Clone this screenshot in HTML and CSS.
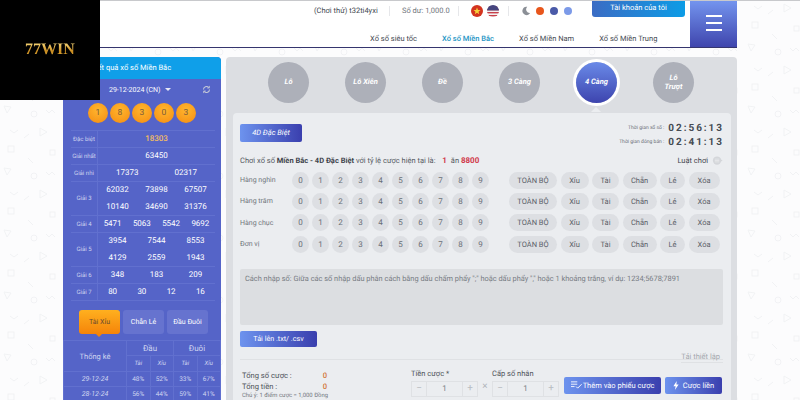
FILE: index.html
```html
<!DOCTYPE html>
<html>
<head>
  <title>Xổ số Miền Bắc</title>
  <link rel="stylesheet" href="styles.css">
</head>
<body>
  <div class="logo"><span>77WIN</span></div>

  <div class="page">
    <header class="header">
      <div class="header-main">
        <div class="top-row">
          <span class="user">(Chơi thử) t32ti4yxi</span>
          <i class="sep"></i>
          <span class="balance">Số dư: 1,000.0</span>
          <i class="sep"></i>
          <svg class="flag" viewBox="0 0 12 12"><circle cx="6" cy="6" r="6" fill="#d3341f"/><polygon points="6,2.5 7,5 9.5,5 7.5,6.7 8.2,9.2 6,7.7 3.8,9.2 4.5,6.7 2.5,5 5,5" fill="#f7d13a"/></svg>
          <svg class="flag" viewBox="0 0 12 12"><defs><clipPath id="us"><circle cx="6" cy="6" r="6"/></clipPath></defs><g clip-path="url(#us)"><rect width="12" height="12" fill="#f3f0f0"/><rect y="1" width="12" height="1.4" fill="#c8414b"/><rect y="4" width="12" height="1.4" fill="#c8414b"/><rect y="7" width="12" height="1.4" fill="#c8414b"/><rect y="10" width="12" height="1.4" fill="#c8414b"/><rect width="12" height="5.4" fill="#46467f"/></g></svg>
          <i class="sep sep-wide"></i>
          <svg class="moon" viewBox="0 0 12 12"><path d="M7.5 1A5 5 0 1 0 11 8.5 4.4 4.4 0 0 1 7.5 1z" fill="#8b8f96"/></svg>
          <i class="dot dot-orange"></i>
          <i class="dot dot-navy"></i>
          <i class="dot dot-sky"></i>
          <a class="account">Tài khoản của tôi</a>
        </div>
        <nav class="nav">
          <a>Xổ số siêu tốc</a>
          <a class="active">Xổ số Miền Bắc</a>
          <a>Xổ số Miền Nam</a>
          <a>Xổ số Miền Trung</a>
        </nav>
      </div>
      <div class="burger"><i></i><i></i><i></i></div>
    </header>

    <div class="content">
      <aside class="sidebar">
        <div class="side-title">Kết quả xổ số Miền Bắc</div>
        <div class="side-date">
          <span>29-12-2024 (CN)</span><i class="caret"></i>
          <svg class="refresh" viewBox="0 0 12 12"><path d="M2 6a4 4 0 0 1 7-2.6M10 6a4 4 0 0 1-7 2.6" fill="none" stroke="#c5cad8" stroke-width="1.4"/><path d="M9.8 1.2v2.8H7M2.2 10.8V8H5" fill="none" stroke="#c5cad8" stroke-width="1.1"/></svg>
        </div>
        <div class="balls">
          <span>1</span><span>8</span><span>3</span><span>0</span><span>3</span>
        </div>
        <div class="results">
          <div class="res-row"><b>Đặc biệt</b><div class="vals one"><span class="special">18303</span></div></div>
          <div class="res-row"><b>Giải nhất</b><div class="vals one"><span>63450</span></div></div>
          <div class="res-row"><b>Giải nhì</b><div class="vals two"><span>17373</span><span>02317</span></div></div>
          <div class="res-row"><b>Giải 3</b><div class="vals three"><span>62032</span><span>73898</span><span>67507</span><span>10140</span><span>34690</span><span>31376</span></div></div>
          <div class="res-row"><b>Giải 4</b><div class="vals four"><span>5471</span><span>5063</span><span>5542</span><span>9692</span></div></div>
          <div class="res-row"><b>Giải 5</b><div class="vals three"><span>3954</span><span>7544</span><span>8553</span><span>4129</span><span>2559</span><span>1943</span></div></div>
          <div class="res-row"><b>Giải 6</b><div class="vals three"><span>348</span><span>183</span><span>209</span></div></div>
          <div class="res-row"><b>Giải 7</b><div class="vals four"><span>80</span><span>30</span><span>12</span><span>16</span></div></div>
        </div>
        <div class="side-tabs">
          <a class="active">Tài Xỉu</a>
          <a>Chẵn Lẻ</a>
          <a>Đầu Đuôi</a>
        </div>
        <table class="stats">
          <tr class="h1"><th rowspan="2" class="stats-name">Thống kê</th><th colspan="2">Đầu</th><th colspan="2">Đuôi</th></tr>
          <tr class="h2"><td>Tài</td><td>Xỉu</td><td>Tài</td><td>Xỉu</td></tr>
          <tr><td class="day">29-12-24</td><td>48%</td><td>52%</td><td>33%</td><td>67%</td></tr>
          <tr><td class="day">28-12-24</td><td>56%</td><td>44%</td><td>59%</td><td>41%</td></tr>
        </table>
      </aside>

      <main class="main">
        <div class="modes">
          <a>Lô</a>
          <a>Lô Xiên</a>
          <a>Đề</a>
          <a>3 Càng</a>
          <a class="active">4 Càng</a>
          <a>Lô<br>Trượt</a>
        </div>

        <section class="panel">
          <div class="panel-top">
            <a class="btn btn-type">4D Đặc Biệt</a>
            <div class="timers">
              <div><small>Thời gian xổ số :</small><b>02:56:13</b></div>
              <div><small>Thời gian đóng bán :</small><b>02:41:13</b></div>
            </div>
          </div>

          <div class="rate">
            <p>Chơi xổ số <b>Miền Bắc - 4D Đặc Biệt</b> với tỷ lệ cược hiện tại là: <em>1</em> ăn <em>8800</em></p>
            <span class="rules">Luật chơi
              <svg viewBox="0 0 12 12"><circle cx="5.5" cy="6" r="4.500" fill="#d4d6da"/><path d="M8 3.500L11.500 6 8 8.500z" fill="#d4d6da"/><path d="M3 4.500h5M3 6h5M3 7.500h5" stroke="#eceef0" stroke-width=".7"/></svg>
            </span>
          </div>

          <div class="pick-row">
            <span class="pick-label">Hàng nghìn</span>
            <div class="digits"><i>0</i><i>1</i><i>2</i><i>3</i><i>4</i><i>5</i><i>6</i><i>7</i><i>8</i><i>9</i></div>
            <div class="quick"><a class="q-all">TOÀN BỘ</a><a class="q-xiu">Xỉu</a><a class="q-tai">Tài</a><a class="q-chan">Chẵn</a><a class="q-le">Lẻ</a><a class="q-xoa">Xóa</a></div>
          </div>
          <div class="pick-row">
            <span class="pick-label">Hàng trăm</span>
            <div class="digits"><i>0</i><i>1</i><i>2</i><i>3</i><i>4</i><i>5</i><i>6</i><i>7</i><i>8</i><i>9</i></div>
            <div class="quick"><a class="q-all">TOÀN BỘ</a><a class="q-xiu">Xỉu</a><a class="q-tai">Tài</a><a class="q-chan">Chẵn</a><a class="q-le">Lẻ</a><a class="q-xoa">Xóa</a></div>
          </div>
          <div class="pick-row">
            <span class="pick-label">Hàng chục</span>
            <div class="digits"><i>0</i><i>1</i><i>2</i><i>3</i><i>4</i><i>5</i><i>6</i><i>7</i><i>8</i><i>9</i></div>
            <div class="quick"><a class="q-all">TOÀN BỘ</a><a class="q-xiu">Xỉu</a><a class="q-tai">Tài</a><a class="q-chan">Chẵn</a><a class="q-le">Lẻ</a><a class="q-xoa">Xóa</a></div>
          </div>
          <div class="pick-row">
            <span class="pick-label">Đơn vị</span>
            <div class="digits"><i>0</i><i>1</i><i>2</i><i>3</i><i>4</i><i>5</i><i>6</i><i>7</i><i>8</i><i>9</i></div>
            <div class="quick"><a class="q-all">TOÀN BỘ</a><a class="q-xiu">Xỉu</a><a class="q-tai">Tài</a><a class="q-chan">Chẵn</a><a class="q-le">Lẻ</a><a class="q-xoa">Xóa</a></div>
          </div>

          <div class="numbers">Cách nhập số: Giữa các số nhập dấu phân cách bằng dấu chấm phẩy ";" hoặc dấu phẩy "," hoặc 1 khoảng trắng, ví dụ: 1234;5678;7891</div>
          <a class="btn btn-upload">Tải lên .txt/ .csv</a>
          <div class="reset-row"><span>Tải thiết lập</span></div>

          <div class="bet-row">
            <div class="totals">
              <div class="total-line"><span>Tổng số cược :</span><b>0</b></div>
              <div class="total-line"><span>Tổng tiền :</span><b>0</b></div>
              <small>Chú ý: 1 điểm cược = 1,000 Đồng</small>
            </div>
            <div class="stepper-box">
              <label>Tiền cược *</label>
              <div class="stepper"><i>−</i><span>1</span><i>+</i></div>
            </div>
            <span class="times">×</span>
            <div class="stepper-box">
              <label>Cấp số nhân</label>
              <div class="stepper"><i>−</i><span>1</span><i>+</i></div>
            </div>
            <a class="btn btn-add">
              <svg viewBox="0 0 14 10"><path d="M0 1h8M0 4h8M0 7h4.500" stroke="#fff" stroke-width="1.100" fill="none"/><path d="M6.500 7l2 2 5-5" stroke="#fff" stroke-width="1.200" fill="none"/></svg>
              Thêm vào phiếu cược</a>
            <a class="btn btn-now">
              <svg viewBox="0 0 8 12"><path d="M5 0L0.500 7H3.500L2.500 12 7.500 4.500H4.500z" fill="#fff"/></svg>
              Cược liền</a>
          </div>
        </section>
      </main>
    </div>
  </div>
</body>
</html>
```

FILE: styles.css
```css
* { box-sizing: border-box; }
html, body { height: 100%; }
body {
  margin: 0;
  width: 800px;
  height: 400px;
  overflow: hidden;
  border-top: 1px solid #c8c9cc;
  font-family: Roboto, "Noto Sans", sans-serif;
  font-size: 8px;
  text-rendering: geometricPrecision;
  color: #444a52;
  background-color: #fcfcfd;
  background-image: url("data:image/svg+xml,%3Csvg xmlns='http://www.w3.org/2000/svg' width='62' height='62' fill='none' stroke='%23f1f2f4' stroke-width='1'%3E%3Crect x='8' y='22' width='6' height='6'/%3E%3Cpath d='M40 4l7 4-7 4zM4 44l7 1-4 6zM28 34l5 5M46 48l3 3 3-3 3 3M10 6l4 3 4-3M24 14l5-4'/%3E%3Ccircle cx='34' cy='52' r='3'/%3E%3Crect x='50' y='26' width='5' height='5'/%3E%3C/svg%3E");
}
a { display: block; text-decoration: none; }
i { font-style: normal; }

.logo {
  position: absolute;
  left: 0;
  top: 0;
  z-index: 5;
  width: 100px;
  height: 100px;
  background: #000;
  display: flex;
  align-items: center;
  justify-content: center;
  font: bold 16px "Liberation Serif", serif;
}
.logo span {
  background: linear-gradient(180deg, #f7d77a 10%, #c98a1c 60%, #f3c95a 90%);
  -webkit-background-clip: text;
  background-clip: text;
  color: transparent;
}

.page { width: 737px; }

/* header */
.header {
  display: flex;
  height: 47px;
  background: #fff;
  border-bottom: 1px solid #35356e;
}
.header-main { flex: 1; min-width: 0; }
.top-row {
  display: flex;
  align-items: flex-start;
  height: 30px;
  padding-left: 314px;
  color: #6f747b;
  font-size: 7.500px;
  line-height: 20px;
}
.user { color: #454a52; width: 65px; white-space: nowrap; }
.balance { width: 46px; white-space: nowrap; }
.sep { width: 1px; height: 10px; margin: 5px 12px 0 10px; background: #e6e7ea; }
.sep-wide { margin: 5px 12px 0 8px; }
.flag { width: 12px; height: 12px; margin: 4px 4px 0 0; }
.flag + .sep-wide { margin-left: 5px; }
.moon { width: 10px; height: 10px; margin: 5px 5px 0 0; }
.dot { width: 8px; height: 8px; margin: 6px 6px 0 0; border-radius: 50%; }
.dot-orange { background: #e8561c; }
.dot-navy { background: #4a5aa8; }
.dot-sky { background: #7c9ae8; }
.account {
  width: 93px;
  height: 17px;
  margin: -1px 0 0 14px;
  border-radius: 0 0 3px 3px;
  background: linear-gradient(90deg, #3b6cc4, #0c9ce6);
  color: #fff;
  text-align: center;
  line-height: 16px;
}
.nav {
  display: flex;
  padding-left: 370px;
  font-size: 7.500px;
  line-height: 16px;
  color: #454a52;
}
.nav a { margin-right: 25px; white-space: nowrap; }
.nav a.active { color: #1c94c4; font-weight: 500; }
.burger {
  width: 47px;
  flex: none;
  display: flex;
  flex-direction: column;
  align-items: center;
  justify-content: center;
  gap: 5px;
  padding-bottom: 2px;
  background: linear-gradient(180deg, #7394ee, #3f45ad);
}
.burger i { width: 16px; height: 2px; background: #fff; }

/* columns */
.content { display: flex; padding: 9px 0 0 63px; }

/* sidebar */
.sidebar {
  width: 158px;
  height: 343px;
  flex: none;
  overflow: hidden;
  border-radius: 4px 4px 0 0;
  background: #5564c8;
  color: #fff;
}
.side-title {
  height: 22px;
  padding-left: 30px;
  background: #0f9fe9;
  font-size: 7.500px;
  line-height: 21px;
}
.side-date {
  display: flex;
  align-items: center;
  height: 21px;
  padding: 0 10px 0 46px;
  font-size: 7px;
}
.caret {
  margin: 0 0 0 5px;
  border: 3px solid transparent;
  border-top: 3px solid #e6e8f5;
  border-bottom: 0;
}
.refresh { width: 9px; height: 9px; margin-left: auto; }
.balls { display: flex; gap: 2px; height: 21px; margin-top: 3px; padding-left: 25px; }
.balls span {
  width: 20px;
  height: 20px;
  border-radius: 50%;
  background: radial-gradient(circle at 50% 35%, #ffb62e, #f58c11);
  color: #7c5a3a;
  font-size: 8.500px;
  line-height: 20px;
  text-align: center;
}

.results { margin: 6px 6px 0 8px; }
.res-row { display: flex; border-top: 1px solid #6170cf; }
.res-row:last-child { border-bottom: 1px solid #6170cf; }
.res-row b {
  width: 27px;
  flex: none;
  display: flex;
  align-items: center;
  justify-content: center;
  border-right: 1px solid #6170cf;
  color: #ccd2ef;
  font-size: 6px;
  font-weight: 400;
  white-space: nowrap;
}
.vals { flex: 1; display: flex; flex-wrap: wrap; }
.vals span { height: 16px; line-height: 16px; text-align: center; font-size: 8px; }
.vals.one span { width: 100%; }
.vals.two span { width: 50%; }
.vals.three span { width: 33.33%; }
.vals.four span { width: 25%; }
.vals .special { color: #f2bd63; font-weight: 500; }
.vals.three span:nth-child(n+4) { margin-top: 1px; }

.side-tabs { display: flex; gap: 3px; height: 39px; padding: 9px 0 0 16px; }
.side-tabs a {
  position: relative;
  width: 41px;
  height: 24px;
  border-radius: 3px;
  background: #6673cf;
  font-size: 7px;
  line-height: 24px;
  text-align: center;
}
.side-tabs a.active { background: linear-gradient(180deg, #ffb01f, #f58409); color: #6a4a30; }
.side-tabs a.active::after {
  content: "";
  position: absolute;
  left: 17px;
  top: 24px;
  border: 3px solid transparent;
  border-top: 3px solid #f58409;
  border-bottom: 0;
}
.stats { width: 158px; border-collapse: collapse; table-layout: fixed; }
.stats td, .stats th {
  padding: 0;
  border: 1px solid #6170cf;
  text-align: center;
  font-size: 6.500px;
  font-weight: 400;
  color: #cfd5f0;
  height: 15px;
}
.stats th { font-size: 8px; }
.stats .stats-name { width: 63px; font-size: 7.500px; }
.stats .h2 td { font-style: italic; font-size: 6px; height: 16px; }
.stats .day { font-style: italic; font-size: 7px; }

/* main */
.main {
  width: 511px;
  height: 343px;
  margin-left: 5px;
  flex: none;
  border-radius: 4px 4px 0 0;
  background: #dcdee2;
  padding-left: 7px;
  padding-right: 6px;
}
.modes { display: flex; gap: 36px; height: 56px; padding: 5px 0 0 35px; }
.modes a {
  position: relative;
  width: 41px;
  height: 41px;
  flex: none;
  display: flex;
  align-items: center;
  justify-content: center;
  text-align: center;
  border-radius: 50%;
  background: #adb0b9;
  color: #fff;
  font-size: 7.500px;
  font-style: italic;
  font-weight: 700;
  line-height: 8.500px;
}
.modes a.active {
  background: linear-gradient(180deg, #6a8ae8, #3d44ae);
  box-shadow: 0 0 0 3px #fff;
}
.modes a.active::after {
  content: "";
  position: absolute;
  left: 15px;
  top: 45px;
  border: 5px solid transparent;
  border-top: 0;
  border-bottom: 5px solid #ebedf0;
}

.panel {
  height: 287px;
  padding: 11px 8px 0 7px;
  border-radius: 4px 4px 0 0;
  background: #ebedf0;
}
.panel-top { display: flex; justify-content: space-between; height: 28px; }
.btn {
  border-radius: 2px;
  background: linear-gradient(90deg, #6d93ee, #3a3fae);
  color: #fff;
  text-align: center;
}
.btn-type { width: 62px; height: 18px; font-size: 7.500px; font-style: italic; line-height: 18px; }
.timers { margin-top: -3px; }
.timers div { display: flex; justify-content: flex-end; align-items: center; height: 14px; }
.timers small { font-size: 5px; color: #6c7178; margin-right: 4px; }
.timers b { font-size: 10px; font-weight: 700; letter-spacing: 1.950px; color: #464b53; margin-right: -1px; }

.rate { display: flex; justify-content: space-between; align-items: center; height: 16px; }
.rate p { margin: 0; font-size: 7.500px; color: #555a62; }
.rate p b { font-weight: 700; color: #3f444c; }
.rate em { margin: 0 2px 0 5px; font-style: normal; font-weight: 700; color: #d0384a; font-size: 8px; }
.rate em:last-child { margin-left: 0; }
.rules { display: flex; align-items: center; gap: 4px; color: #3f444c; font-size: 7.500px; }
.rules svg { width: 11px; height: 11px; }

.pick-row { display: flex; align-items: center; height: 17px; margin-top: 4.400px; }
.rate + .pick-row { margin-top: 3.500px; }
.pick-label { width: 52px; flex: none; font-size: 7px; color: #70757c; }
.digits { display: flex; gap: 3px; }
.digits i {
  width: 17px;
  height: 17px;
  border-radius: 50%;
  background: #dddfe3;
  color: #696e76;
  font-size: 8px;
  line-height: 17px;
  text-align: center;
}
.quick { display: flex; gap: 3.500px; margin-left: 20px; }
.quick a {
  height: 17px;
  border-radius: 9px;
  background: #dddfe3;
  color: #5b6068;
  font-size: 7.500px;
  line-height: 17px;
  text-align: center;
}
.q-all { width: 48px; }
.q-xiu { width: 28px; }
.q-tai { width: 27px; }
.q-chan { width: 34px; }
.q-le { width: 25px; }
.q-xoa { width: 31px; }

.numbers {
  height: 56px;
  margin-top: 16.300px;
  padding: 4px 5px;
  border-radius: 2px;
  background: #dcdee1;
  color: #777c83;
  font-size: 7.400px;
  line-height: 11px;
  white-space: nowrap;
  overflow: hidden;
}
.btn-upload { width: 77px; height: 16px; margin-top: 6px; font-size: 7.200px; line-height: 15px; }
.reset-row {
  display: flex;
  justify-content: flex-end;
  height: 13px;
  border-bottom: 1px solid #dfe1e4;
  color: #a4a8ae;
  font-size: 7.500px;
}
.reset-row span {
  height: 16px;
  padding-right: 3px;
  border-bottom: 1px solid #dfe1e4;
  line-height: 20px;
}
.bet-row { display: flex; height: 40px; }
.totals { width: 171px; padding: 10px 0 0 2px; }
.total-line {
  display: flex;
  height: 11px;
  width: 85px;
  justify-content: space-between;
  color: #4e535a;
  font-size: 7.600px;
  line-height: 11px;
}
.total-line b { color: #d2763a; font-weight: 500; }
.totals small { display: block; font-size: 5.900px; line-height: 9px; color: #72777e; white-space: nowrap; }
.stepper-box { width: 67px; padding-top: 8px; }
.stepper-box label { display: block; height: 13px; line-height: 11px; font-size: 7.500px; color: #4e535a; }
.stepper {
  display: flex;
  height: 16px;
  border: 1px solid #dfe1e4;
  color: #7a7f86;
  font-size: 8px;
  line-height: 14px;
  text-align: center;
}
.stepper i { width: 14px; flex: none; color: #b8bcc2; font-size: 10px; }
.stepper span { flex: 1; border-left: 1px solid #dfe1e4; border-right: 1px solid #dfe1e4; }
.times { width: 14px; padding-top: 21px; text-align: center; color: #b0b4ba; font-size: 10px; }
.btn-add, .btn-now {
  display: flex;
  align-items: center;
  justify-content: center;
  height: 17px;
  margin-top: 17px;
  font-size: 7.500px;
  white-space: nowrap;
}
.btn-add { width: 97px; margin-left: 5px; gap: 1px; }
.btn-add svg { width: 11px; height: 8px; }
.btn-now { width: 57px; margin-left: 4px; gap: 4px; }
.btn-now svg { width: 6px; height: 9px; }
```
